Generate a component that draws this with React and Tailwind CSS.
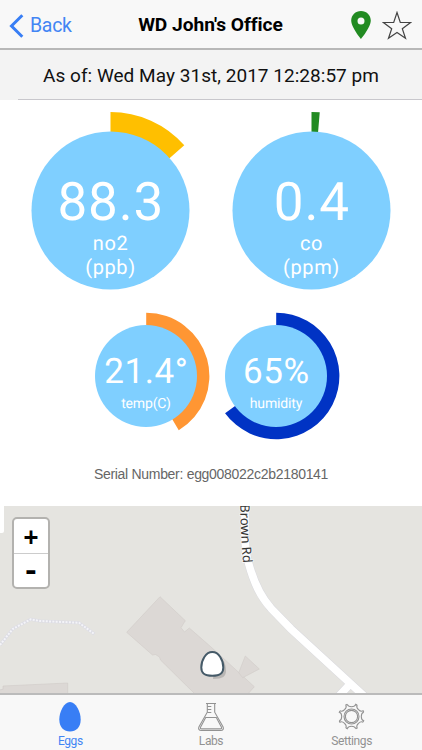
import React from 'react';

const point = (cx, cy, r, deg) => {
    const rad = (deg * Math.PI) / 180;
    return `${(cx + r * Math.sin(rad)).toFixed(2)} ${(cy - r * Math.cos(rad)).toFixed(2)}`;
};

const ringPath = (cx, cy, inner, outer, deg) => {
    const large = deg > 180 ? 1 : 0;
    return `M${point(cx, cy, outer, 0)} A${outer} ${outer} 0 ${large} 1 ${point(cx, cy, outer, deg)} L${point(cx, cy, inner, deg)} A${inner} ${inner} 0 ${large} 0 ${point(cx, cy, inner, 0)}Z`;
};

const LargeGauge = ({ value, name, unit, angle, color }) => (
    <svg width="201" height="200" viewBox="0 0 201 200" textAnchor="middle" fill="#fff" textRendering="geometricPrecision">
        <path d={ringPath(100.5, 110.5, 78, 98.5, angle)} fill={color} />
        <circle cx="100.5" cy="110.5" r="79" fill="#7fcfff" />
        <text x="100.800" y="120" fontSize="53" letterSpacing="0.800">{value}</text>
        <text x="100.500" y="149.500" fontSize="20" letterSpacing="0.600">{name}</text>
        <text x="100.500" y="174" fontSize="20" letterSpacing="0.600">{unit}</text>
    </svg>
);

const SmallGauge = ({ value, name, angle, color }) => (
    <svg width="130" height="140" viewBox="0 0 130 140" textAnchor="middle" fill="#fff" textRendering="geometricPrecision">
        <path d={ringPath(65.2, 76, 50, 63.2, angle)} fill={color} />
        <circle cx="65" cy="76" r="51" fill="#7fcfff" />
        <text x="65.400" y="82.500" fontSize="35" letterSpacing="0.600">{value}</text>
        <text x="65" y="108" fontSize="14" letterSpacing="-0.150">{name}</text>
    </svg>
);

const Header = () => (
    <header className="flex h-[50px] items-center border-b-2 border-[#b8b8b8] bg-[#f8f8f8] pl-[9px] pr-[10px] pt-[3px]">
        <button className="flex w-[110px] items-center gap-[6px] text-[19.5px] tracking-[-0.3px] text-[#4285f4]">
            <svg width="15" height="24" viewBox="0 0 15 24" fill="none" stroke="#387ef5" strokeWidth="3">
                <path d="M13.3 1.3 2.5 12l10.8 10.7" />
            </svg>
            Back
        </button>
        <h1 className="flex-1 whitespace-nowrap text-center text-[19.2px] font-bold tracking-[-0.05px] text-black">WD John's Office</h1>
        <div className="flex w-[110px] items-center justify-end gap-[11px]">
            <svg width="20" height="29" viewBox="0 0 20 29">
                <path d="M10 0C4.500 0 .2 4.200.2 9.600.2 16.500 10 28 10 28S19.800 16.500 19.800 9.600C19.800 4.200 15.500 0 10 0Zm0 6.400a3.500 3.500 0 1 1 0 7 3.500 3.500 0 0 1 0-7Z" fill="#228b22" />
            </svg>
            <svg width="30" height="29" viewBox="0 0 30 29" fill="none" stroke="#444" strokeWidth="1.200">
                <path d="m15 1.500 3.300 10h10.300l-8.300 6.200 3.200 9.600-8.500-5.900-8.500 5.900 3.200-9.600L1.400 11.500h10.300Z" />
            </svg>
        </div>
    </header>
);

const EggMap = () => (
    <section className="relative h-[187px] overflow-hidden bg-[#e5e4e0]">
        <svg className="block" width="422" height="188" viewBox="0 0 422 188">
            <path d="M0 0h4v25q0 2-2 2H0Z" fill="#fff" />
            <path d="M0 139 12.700 123l18-9.700 9.300 1.700 39 1.700L94.300 128" fill="none" stroke="#dcdce4" strokeWidth="3" />
            <path d="M0 139 12.700 123l18-9.700 9.300 1.700 39 1.700L94.300 128" fill="none" stroke="#f4f4f8" strokeWidth="2" strokeDasharray="2 1.300" />
            <g fill="#dcd8d5" stroke="#d0cbc7" strokeWidth=".6">
                <path d="M160 90.700 185.300 114.700 181 121.700 184.500 126 189.300 122 210.700 140.700 254.300 180.700 247 189H196L160.500 154l-1-3-4-2.500-3 .5-25.800-22.700Z" />
                <path d="M245.300 150 259.300 163 242.700 171.700 238.700 166.700Z" />
                <path d="M-1 184l4-.7V180l64.700-3v12H-1Z" />
            </g>
            <g fill="none">
                <path d="M245-2C245 25 244 42 248.500 57c5.500 20 11.500 33 22.500 45.300L291 123l73 67M339 190l12-13" stroke="#dadade" strokeWidth="8.600" />
                <path d="M245-2C245 25 244 42 248.500 57c5.500 20 11.500 33 22.500 45.300L291 123l73 67M339 190l12-13" stroke="#fff" strokeWidth="7.600" />
                <path id="brownRd" d="M240.200-1.500Q240.200 28 244.500 75" />
            </g>
            <text fontFamily="Noto Sans, sans-serif" fontSize="13" fill="#333" stroke="#f5f5f5" strokeWidth="1.500" paintOrder="stroke" textRendering="geometricPrecision">
                <textPath href="#brownRd">Brown Rd</textPath>
            </text>
            <path d="M215 148c8 2 11 10 11 17 0 5-3 8-13 8Z" fill="#777" opacity=".35" />
            <path d="M212.300 146c-6.500 0-11 8-11 15.500 0 6 3 8.300 11 8.300s11-2.300 11-8.300c0-7.500-4.500-15.500-11-15.500Z" fill="#fff" stroke="#455a68" strokeWidth="2" />
        </svg>
        <div className="absolute left-3 top-[11px] flex w-[38px] flex-col rounded-[5px] border-2 border-[#b3b2af] bg-white text-black">
            <button className="flex h-[35px] items-center justify-center border-b border-[#ccc] pt-px" aria-label="Zoom in">
                <span className="font-['DejaVu_Sans_Mono',monospace] text-[24px] font-bold leading-none">+</span>
            </button>
            <button className="flex h-[33px] items-center justify-center" aria-label="Zoom out">
                <span className="scale-x-110 font-['DejaVu_Sans_Mono',monospace] text-[26px] font-bold leading-none">-</span>
            </button>
        </div>
    </section>
);

const EggIcon = () => (
    <svg width="30" height="32" viewBox="0 0 30 32">
        <path d="M15 1C9 1 4.300 11 4.300 18.500 4.300 26.500 9 30.500 15 30.500s10.700-4 10.700-12C25.700 11 21 1 15 1Z" fill="#387ef5" />
    </svg>
);

const FlaskIcon = () => (
    <svg width="30" height="32" viewBox="0 0 30 32" fill="none" stroke="#929292" strokeWidth="1.100">
        <path d="M10 2.500h10M11.300 2.500v8.700L3 25.800c-1.100 2 .1 3.700 2.200 3.700h19.600c2.100 0 3.300-1.700 2.200-3.700l-8.300-14.600V2.500" />
        <path d="M9.700 16.500h10.600l5.200 9.700c.5 1-.1 1.700-1 1.700h-19c-.9 0-1.500-.7-1-1.700ZM11.300 5.500h4M11.300 8.500h4M11.300 11.500h4" />
    </svg>
);

// eight scalloped sides around two concentric rings
const GearIcon = () => (
    <svg width="30" height="32" viewBox="0 0 30 32" fill="none" stroke="#929292" strokeWidth="1.100">
        {[0, 45, 90, 135, 180, 225, 270, 315].map((deg) => (
            <path key={deg} transform={`translate(14.5 15.500) rotate(${deg})`} d="M-4.200-12.200Q-3.500-9.800 0-9.800Q3.500-9.800 4.200-12.200L5.660-11.600" />
        ))}
        <circle cx="14.500" cy="15.500" r="7.500" />
        <circle cx="14.500" cy="15.500" r="6.100" />
    </svg>
);

const tabs = [
    { label: 'Eggs', Icon: EggIcon, active: true },
    { label: 'Labs', Icon: FlaskIcon },
    { label: 'Settings', Icon: GearIcon },
];

const App = () => (
    <div className="flex h-[750px] w-[422px] flex-col overflow-hidden bg-white font-[Roboto,sans-serif]">
        <Header />
        <div className="flex h-[50px] items-center justify-center bg-[#f3f3f3] pt-[3px] text-[19px] tracking-[0.03px] text-[#111]">
            As of: Wed May 31st, 2017 12:28:57 pm
        </div>
        <div className="-mt-px ml-[18px] h-px bg-[#c8c7cc]" />
        <div className="flex justify-center">
            <LargeGauge value="88.3" name="no2" unit="(ppb)" angle={48.5} color="#ffbf00" />
            <LargeGauge value="0.4" name="co" unit="(ppm)" angle={4.8} color="#228b22" />
        </div>
        <div className="flex justify-center">
            <SmallGauge value="21.4°" name="temp(C)" angle={149} color="#ff9633" />
            <SmallGauge value="65%" name="humidity" angle={234} color="#0033c4" />
        </div>
        <p className="flex h-[66px] items-center justify-center pt-[3px] font-['Liberation_Sans',sans-serif] text-[14px] tracking-[-0.3px] text-[#666]">
            Serial Number: egg008022c2b2180141
        </p>
        <EggMap />
        <nav className="flex flex-1 border-t-2 border-[#bbb] bg-[#f8f8f8]">
            {tabs.map(({ label, Icon, active }) => (
                <button key={label} className={`flex flex-1 flex-col items-center pt-[6px] text-[12px] leading-[16px] tracking-[-0.4px] ${active ? 'text-[#4285f4]' : 'text-[#929292]'}`}>
                    <Icon />
                    {label}
                </button>
            ))}
        </nav>
    </div>
);

export default App;
